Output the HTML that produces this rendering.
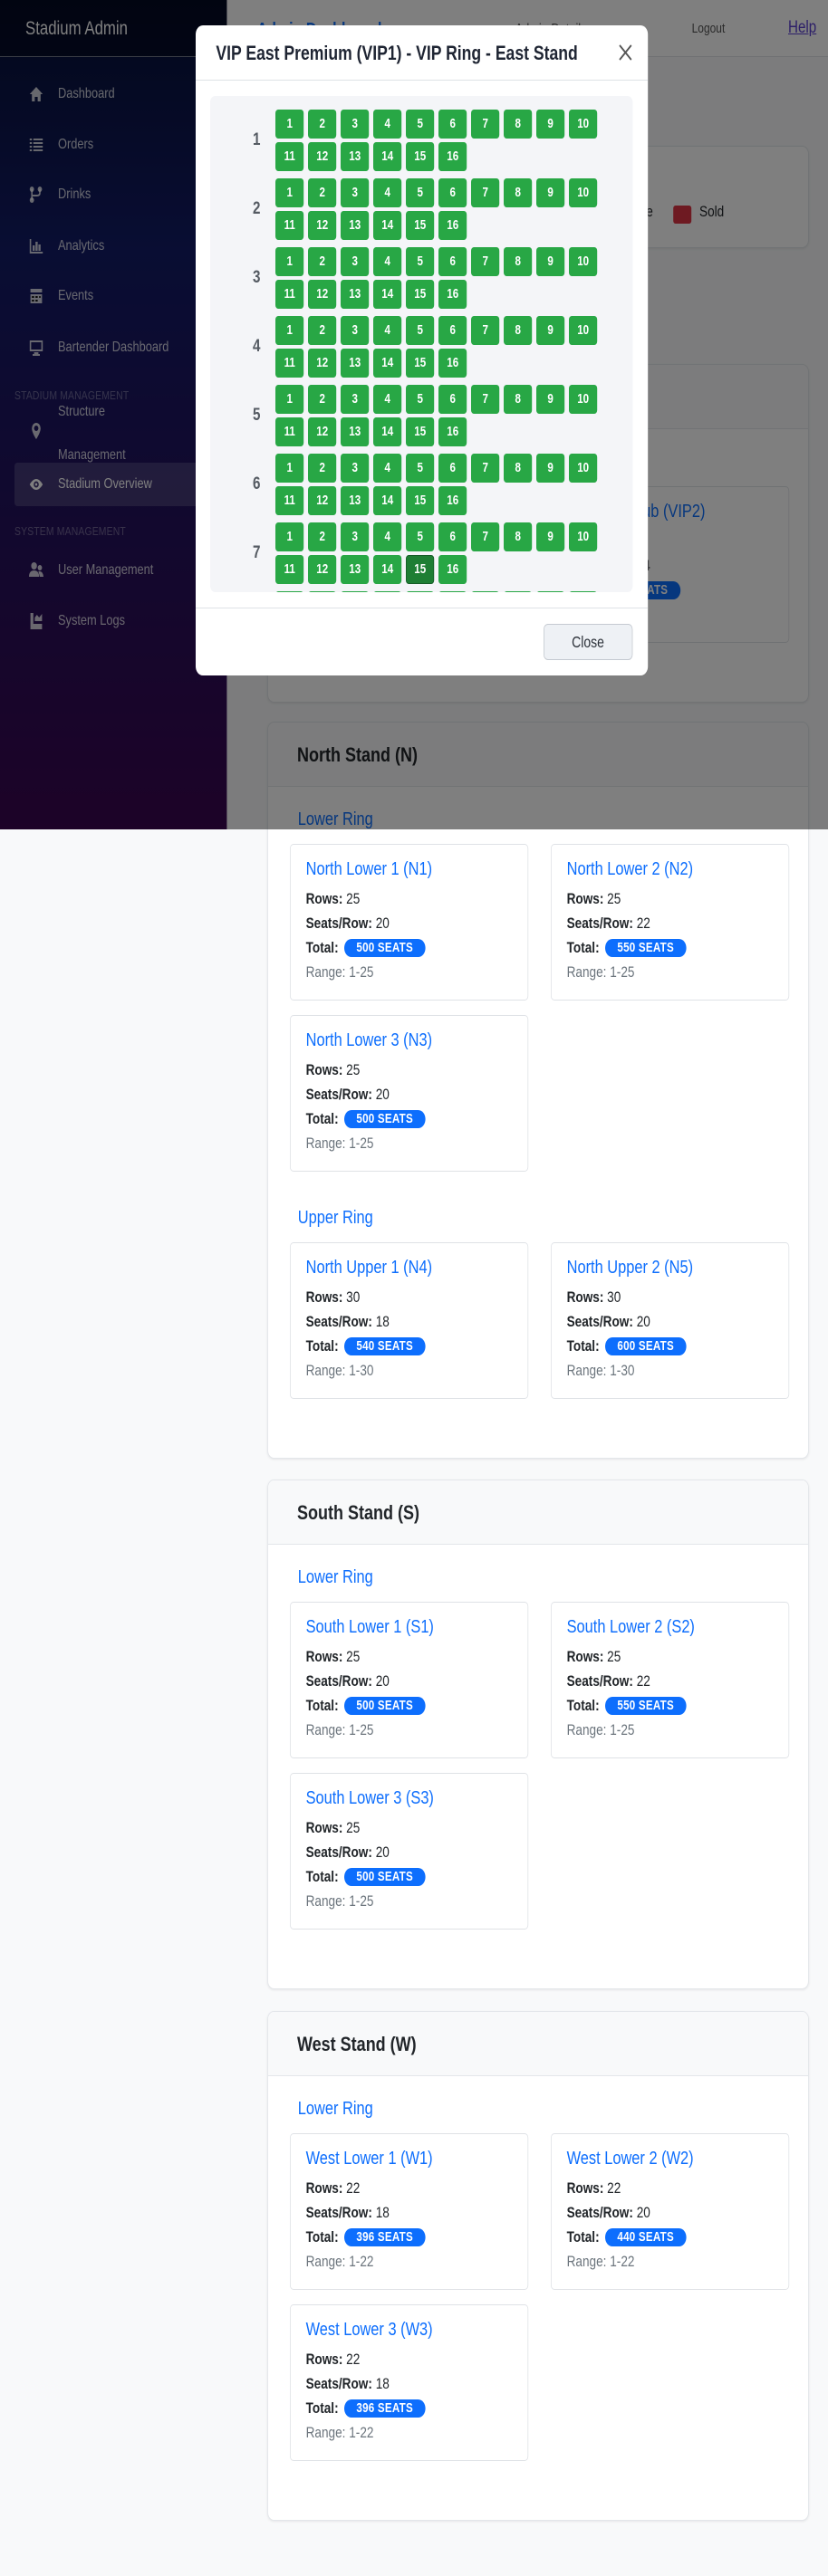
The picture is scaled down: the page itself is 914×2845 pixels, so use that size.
<!DOCTYPE html>
<html><head><meta charset="utf-8">
<style>
*{box-sizing:border-box;margin:0;padding:0}
html,body{width:914px;height:2845px;overflow:hidden;background:#f8f9fa;font-family:"Liberation Sans",sans-serif}
#w{position:absolute;left:0;top:0;width:1142.5px;height:2845px;transform:scaleX(0.8);transform-origin:0 0;background:#f8f9fa}
.sb{position:absolute;left:0;top:0;width:312.5px;height:916px;background:linear-gradient(180deg,#061036 0%,#121b66 30%,#22125e 60%,#3a0650 100%)}
.sb .hd{height:63px;border-bottom:1px solid rgba(255,255,255,.45);color:#fff;font-size:21px;line-height:63px;padding-left:35px;background:rgba(0,0,0,.35)}
.ni{position:absolute;left:39px;color:rgba(255,255,255,.8);font-size:16px;height:24px;line-height:24px;width:270px}
.ni svg{position:absolute;left:0;top:2px;width:22px;height:20px;fill:rgba(255,255,255,.8)}
.ni span{position:absolute;left:41px;white-space:nowrap}
.sec{position:absolute;left:20px;color:rgba(255,255,255,.35);font-size:13px;letter-spacing:.2px}
.act{position:absolute;left:20px;top:511px;width:293px;height:48px;background:rgba(255,255,255,.16);border-radius:4px}
.top{position:absolute;left:312.5px;top:0;width:830px;height:63px;background:#fff;border-bottom:1px solid #dee2e6}
.card{position:absolute;left:369px;width:747px;background:#fff;border:1px solid #e3e6ea;border-radius:9px;box-shadow:0 1px 3px rgba(0,0,0,.08);overflow:hidden}
.card .ch{height:71px;background:#f8f9fa;border-bottom:1px solid #e3e6ea;font-size:22.5px;font-weight:bold;color:#212529;line-height:71px;padding-left:40px}
.cb{padding:22px 30px 65px 30px}
.rl{height:28px;line-height:28px;color:#0d6efd;font-size:20.5px;padding-left:11px;margin-bottom:13px}
.rl.up{margin-top:37px}
.gr{display:grid;grid-template-columns:329px 329px;column-gap:31px;row-gap:16px}
.sc{height:173px;border:1px solid #dfe2e6;border-radius:5px;padding:14px 0 0 21px}
.sc .t{color:#0d6efd;font-size:20.5px;line-height:26px;height:31.5px;white-space:nowrap}
.sc .l{font-size:17px;line-height:27.3px;color:#212529;white-space:nowrap}
.sc .l b{font-weight:bold}
.sc .r{color:#6c757d}
.bd{display:inline-block;background:#0d6efd;color:#fff;font-size:14.5px;font-weight:bold;border-radius:12px;height:20px;line-height:20px;padding:0 17px;vertical-align:1px;margin-left:3px;letter-spacing:.3px}
.ov{position:absolute;left:0;top:0;width:1142.5px;height:916px;background:rgba(0,0,0,.5)}
.mo{position:absolute;left:270px;top:28px;width:624px;height:718px;background:#fff;border-radius:10px;overflow:hidden}
.mo .mh{height:61px;border-bottom:1px solid #dee2e6;font-size:22px;font-weight:bold;color:#1f2533;line-height:61px;padding-left:28px;position:relative;white-space:nowrap}
.mo .x{position:absolute;left:582px;top:19px;width:22px;height:22px}
.gb{position:absolute;left:20px;top:78px;width:582.5px;height:548px;background:#f4f5f8;border-radius:7px;overflow:hidden}
.row{position:absolute;left:0;width:560px;height:68px}
.rlab{position:absolute;left:38px;width:52px;top:0;height:68px;line-height:68px;text-align:center;font-size:19px;font-weight:bold;color:#555b63}
.seats{position:absolute;left:90px;top:0;width:460px;display:flex;flex-wrap:wrap}
.s{width:39.4px;height:32px;margin:0 5.6px 4px 0;background:#28a745;border-radius:4px;color:#fff;font-size:14.5px;font-weight:bold;text-align:center;line-height:32px}
.s.sel{background:#1e7e34;border:1px solid #155d27;line-height:30px}
.mf{position:absolute;left:0;top:643px;width:624px;border-top:1px solid #dee2e6;height:75px}
.cl{position:absolute;left:480px;top:17px;width:122.5px;height:40px;background:#eef1f5;border:1px solid #c5cad1;border-radius:6px;text-align:center;line-height:38px;font-size:17.5px;color:#2b3038}
</style></head><body>
<div id="w">
<div class="top">
 <div style="position:absolute;left:42px;top:22px;font-size:20px;color:#0d6efd;font-weight:bold">Admin Dashboard</div>
 <div style="position:absolute;left:385px;top:24px;font-size:16px;color:#555">&#9679; Admin Details</div>
 <div style="position:absolute;left:642px;top:23px;font-size:15px;color:#555">Logout</div>
 <div style="position:absolute;left:775px;top:20px;font-size:19px;color:#5b3fd1;text-decoration:underline">Help</div>
</div>
<div class="card" style="top:161px;height:113px">
 <div style="position:absolute;right:214px;top:62px;font-size:17px;color:#212529">Available</div>
 <div style="position:absolute;left:559px;top:65px;width:25px;height:20px;background:#dc3545;border-radius:3px"></div>
 <div style="position:absolute;left:595px;top:62px;font-size:17px;color:#212529">Sold</div>
</div>
<div class="card" style="top:402px">
 <div class="ch">East Stand (E)</div>
 <div class="cb">
  <div class="rl">VIP Ring</div>
  <div class="gr">
   <div class="sc"><div class="t">VIP East Premium (VIP1)</div><div class="l"><b>Rows:</b> 8</div><div class="l"><b>Seats/Row:</b> 16</div><div class="l"><b>Total:</b> <span class="bd">128 SEATS</span></div><div class="l r">Range: 1-8</div></div>
   <div class="sc"><div class="t">VIP East Club (VIP2)</div><div class="l"><b>Rows:</b> 6</div><div class="l"><b>Seats/Row:</b> 14</div><div class="l"><b>Total:</b> <span class="bd">84 SEATS</span></div><div class="l r">Range: 1-6</div></div>
  </div>
 </div>
</div>
<div class="card" style="top:797px">
 <div class="ch">North Stand (N)</div>
 <div class="cb">
  <div class="rl">Lower Ring</div>
  <div class="gr">
   <div class="sc"><div class="t">North Lower 1 (N1)</div><div class="l"><b>Rows:</b> 25</div><div class="l"><b>Seats/Row:</b> 20</div><div class="l"><b>Total:</b> <span class="bd">500 SEATS</span></div><div class="l r">Range: 1-25</div></div>
   <div class="sc"><div class="t">North Lower 2 (N2)</div><div class="l"><b>Rows:</b> 25</div><div class="l"><b>Seats/Row:</b> 22</div><div class="l"><b>Total:</b> <span class="bd">550 SEATS</span></div><div class="l r">Range: 1-25</div></div>
   <div class="sc"><div class="t">North Lower 3 (N3)</div><div class="l"><b>Rows:</b> 25</div><div class="l"><b>Seats/Row:</b> 20</div><div class="l"><b>Total:</b> <span class="bd">500 SEATS</span></div><div class="l r">Range: 1-25</div></div>
  </div>
  <div class="rl up">Upper Ring</div>
  <div class="gr">
   <div class="sc"><div class="t">North Upper 1 (N4)</div><div class="l"><b>Rows:</b> 30</div><div class="l"><b>Seats/Row:</b> 18</div><div class="l"><b>Total:</b> <span class="bd">540 SEATS</span></div><div class="l r">Range: 1-30</div></div>
   <div class="sc"><div class="t">North Upper 2 (N5)</div><div class="l"><b>Rows:</b> 30</div><div class="l"><b>Seats/Row:</b> 20</div><div class="l"><b>Total:</b> <span class="bd">600 SEATS</span></div><div class="l r">Range: 1-30</div></div>
  </div>
 </div>
</div>
<div class="card" style="top:1634px">
 <div class="ch">South Stand (S)</div>
 <div class="cb">
  <div class="rl">Lower Ring</div>
  <div class="gr">
   <div class="sc"><div class="t">South Lower 1 (S1)</div><div class="l"><b>Rows:</b> 25</div><div class="l"><b>Seats/Row:</b> 20</div><div class="l"><b>Total:</b> <span class="bd">500 SEATS</span></div><div class="l r">Range: 1-25</div></div>
   <div class="sc"><div class="t">South Lower 2 (S2)</div><div class="l"><b>Rows:</b> 25</div><div class="l"><b>Seats/Row:</b> 22</div><div class="l"><b>Total:</b> <span class="bd">550 SEATS</span></div><div class="l r">Range: 1-25</div></div>
   <div class="sc"><div class="t">South Lower 3 (S3)</div><div class="l"><b>Rows:</b> 25</div><div class="l"><b>Seats/Row:</b> 20</div><div class="l"><b>Total:</b> <span class="bd">500 SEATS</span></div><div class="l r">Range: 1-25</div></div>
  </div>
 </div>
</div>
<div class="card" style="top:2221px">
 <div class="ch">West Stand (W)</div>
 <div class="cb">
  <div class="rl">Lower Ring</div>
  <div class="gr">
   <div class="sc"><div class="t">West Lower 1 (W1)</div><div class="l"><b>Rows:</b> 22</div><div class="l"><b>Seats/Row:</b> 18</div><div class="l"><b>Total:</b> <span class="bd">396 SEATS</span></div><div class="l r">Range: 1-22</div></div>
   <div class="sc"><div class="t">West Lower 2 (W2)</div><div class="l"><b>Rows:</b> 22</div><div class="l"><b>Seats/Row:</b> 20</div><div class="l"><b>Total:</b> <span class="bd">440 SEATS</span></div><div class="l r">Range: 1-22</div></div>
   <div class="sc"><div class="t">West Lower 3 (W3)</div><div class="l"><b>Rows:</b> 22</div><div class="l"><b>Seats/Row:</b> 18</div><div class="l"><b>Total:</b> <span class="bd">396 SEATS</span></div><div class="l r">Range: 1-22</div></div>
  </div>
 </div>
</div>
<div class="sb">
 <div class="hd">Stadium Admin</div>
 <div class="ni" style="top:92px"><svg viewBox="0 0 20 20"><path d="M10 2 1 10h3v8h4v-5h4v5h4v-8h3z"/></svg><span>Dashboard</span></div>
 <div class="ni" style="top:148px"><svg viewBox="0 0 20 20"><path d="M1 3h3v2H1zM6 3h13v2H6zM1 7h3v2H1zM6 7h13v2H6zM1 11h3v2H1zM6 11h13v2H6zM1 15h3v2H1zM6 15h13v2H6z"/></svg><span>Orders</span></div>
 <div class="ni" style="top:203px"><svg viewBox="0 0 20 20"><circle cx="4" cy="4" r="3"/><circle cx="15" cy="4" r="3"/><circle cx="4" cy="16" r="3"/><path d="M3 4h2v12H3zM14 4h2v4q0 4-5 4H5v-2h6q3 0 3-2z"/></svg><span>Drinks</span></div>
 <div class="ni" style="top:260px"><svg viewBox="0 0 20 20"><path d="M1 2h2v14h16v2H1zM5 9h3v6H5zM9 5h3v10H9zM13 8h3v7h-3z"/></svg><span>Analytics</span></div>
 <div class="ni" style="top:315px"><svg viewBox="0 0 20 20"><path d="M2 2h16v4H2zM2 8h16v10H2z"/><path d="M4 10h3v2H4zM9 10h3v2H9zM14 10h2v2h-2zM4 14h3v2H4zM9 14h3v2H9z" fill="#111"/></svg><span>Events</span></div>
 <div class="ni" style="top:372px"><svg viewBox="0 0 20 20"><path d="M1 2h18v12H1zM3 4v8h14V4zM7 15h6v2h2v2H5v-2h2z"/></svg><span>Bartender Dashboard</span></div>
 <div class="sec" style="top:429px">STADIUM MANAGEMENT</div>
 <div class="ni" style="top:443px;height:72px"><svg viewBox="0 0 20 20" style="top:23px"><path d="M10 1a6 6 0 0 0-6 6c0 5 6 12 6 12s6-7 6-12a6 6 0 0 0-6-6zm0 3a3 3 0 1 1 0 6 3 3 0 0 1 0-6z"/></svg><span style="top:0">Structure</span><span style="top:48px">Management</span></div>
 <div class="act"></div>
 <div class="ni" style="top:523px;color:#fff"><svg viewBox="0 0 20 20" style="fill:#fff"><path d="M10 4C5 4 1 10 1 10s4 6 9 6 9-6 9-6-4-6-9-6zm0 2.5a3.5 3.5 0 1 1 0 7 3.5 3.5 0 0 1 0-7zm0 2a1.5 1.5 0 1 0 0 3 1.5 1.5 0 0 0 0-3z"/></svg><span>Stadium Overview</span></div>
 <div class="sec" style="top:579px">SYSTEM MANAGEMENT</div>
 <div class="ni" style="top:618px"><svg viewBox="0 0 20 20"><circle cx="7" cy="5" r="4"/><path d="M0 17c0-5 3-7 7-7s7 2 7 7z"/><circle cx="15" cy="7" r="3"/><path d="M13 11q6-1 7 6h-5z"/></svg><span>User Management</span></div>
 <div class="ni" style="top:674px"><svg viewBox="0 0 20 20"><path d="M2 1h4v12h12v6H2z"/><path d="M8 6l3-3 3 3 4-4v8H8z"/></svg><span>System Logs</span></div>
</div>
<div class="ov"></div>
<div class="mo">
 <div class="mh">VIP East Premium (VIP1) - VIP Ring - East Stand
  <svg class="x" viewBox="0 0 22 22"><path d="M3 3 19 19M19 3 3 19" stroke="#555" stroke-width="2.2"/></svg>
 </div>
 <div class="gb">
  <div class="row" style="top:15px"><div class="rlab">1</div><div class="seats"><div class="s">1</div><div class="s">2</div><div class="s">3</div><div class="s">4</div><div class="s">5</div><div class="s">6</div><div class="s">7</div><div class="s">8</div><div class="s">9</div><div class="s">10</div><div class="s">11</div><div class="s">12</div><div class="s">13</div><div class="s">14</div><div class="s">15</div><div class="s">16</div></div></div>
  <div class="row" style="top:91px"><div class="rlab">2</div><div class="seats"><div class="s">1</div><div class="s">2</div><div class="s">3</div><div class="s">4</div><div class="s">5</div><div class="s">6</div><div class="s">7</div><div class="s">8</div><div class="s">9</div><div class="s">10</div><div class="s">11</div><div class="s">12</div><div class="s">13</div><div class="s">14</div><div class="s">15</div><div class="s">16</div></div></div>
  <div class="row" style="top:167px"><div class="rlab">3</div><div class="seats"><div class="s">1</div><div class="s">2</div><div class="s">3</div><div class="s">4</div><div class="s">5</div><div class="s">6</div><div class="s">7</div><div class="s">8</div><div class="s">9</div><div class="s">10</div><div class="s">11</div><div class="s">12</div><div class="s">13</div><div class="s">14</div><div class="s">15</div><div class="s">16</div></div></div>
  <div class="row" style="top:243px"><div class="rlab">4</div><div class="seats"><div class="s">1</div><div class="s">2</div><div class="s">3</div><div class="s">4</div><div class="s">5</div><div class="s">6</div><div class="s">7</div><div class="s">8</div><div class="s">9</div><div class="s">10</div><div class="s">11</div><div class="s">12</div><div class="s">13</div><div class="s">14</div><div class="s">15</div><div class="s">16</div></div></div>
  <div class="row" style="top:319px"><div class="rlab">5</div><div class="seats"><div class="s">1</div><div class="s">2</div><div class="s">3</div><div class="s">4</div><div class="s">5</div><div class="s">6</div><div class="s">7</div><div class="s">8</div><div class="s">9</div><div class="s">10</div><div class="s">11</div><div class="s">12</div><div class="s">13</div><div class="s">14</div><div class="s">15</div><div class="s">16</div></div></div>
  <div class="row" style="top:395px"><div class="rlab">6</div><div class="seats"><div class="s">1</div><div class="s">2</div><div class="s">3</div><div class="s">4</div><div class="s">5</div><div class="s">6</div><div class="s">7</div><div class="s">8</div><div class="s">9</div><div class="s">10</div><div class="s">11</div><div class="s">12</div><div class="s">13</div><div class="s">14</div><div class="s">15</div><div class="s">16</div></div></div>
  <div class="row" style="top:471px"><div class="rlab">7</div><div class="seats"><div class="s">1</div><div class="s">2</div><div class="s">3</div><div class="s">4</div><div class="s">5</div><div class="s">6</div><div class="s">7</div><div class="s">8</div><div class="s">9</div><div class="s">10</div><div class="s">11</div><div class="s">12</div><div class="s">13</div><div class="s">14</div><div class="s sel">15</div><div class="s">16</div></div></div>
  <div class="row" style="top:547px"><div class="rlab">8</div><div class="seats"><div class="s">1</div><div class="s">2</div><div class="s">3</div><div class="s">4</div><div class="s">5</div><div class="s">6</div><div class="s">7</div><div class="s">8</div><div class="s">9</div><div class="s">10</div></div></div>
 </div>
 <div class="mf"><div class="cl">Close</div></div>
</div>
</div>
</body></html>
